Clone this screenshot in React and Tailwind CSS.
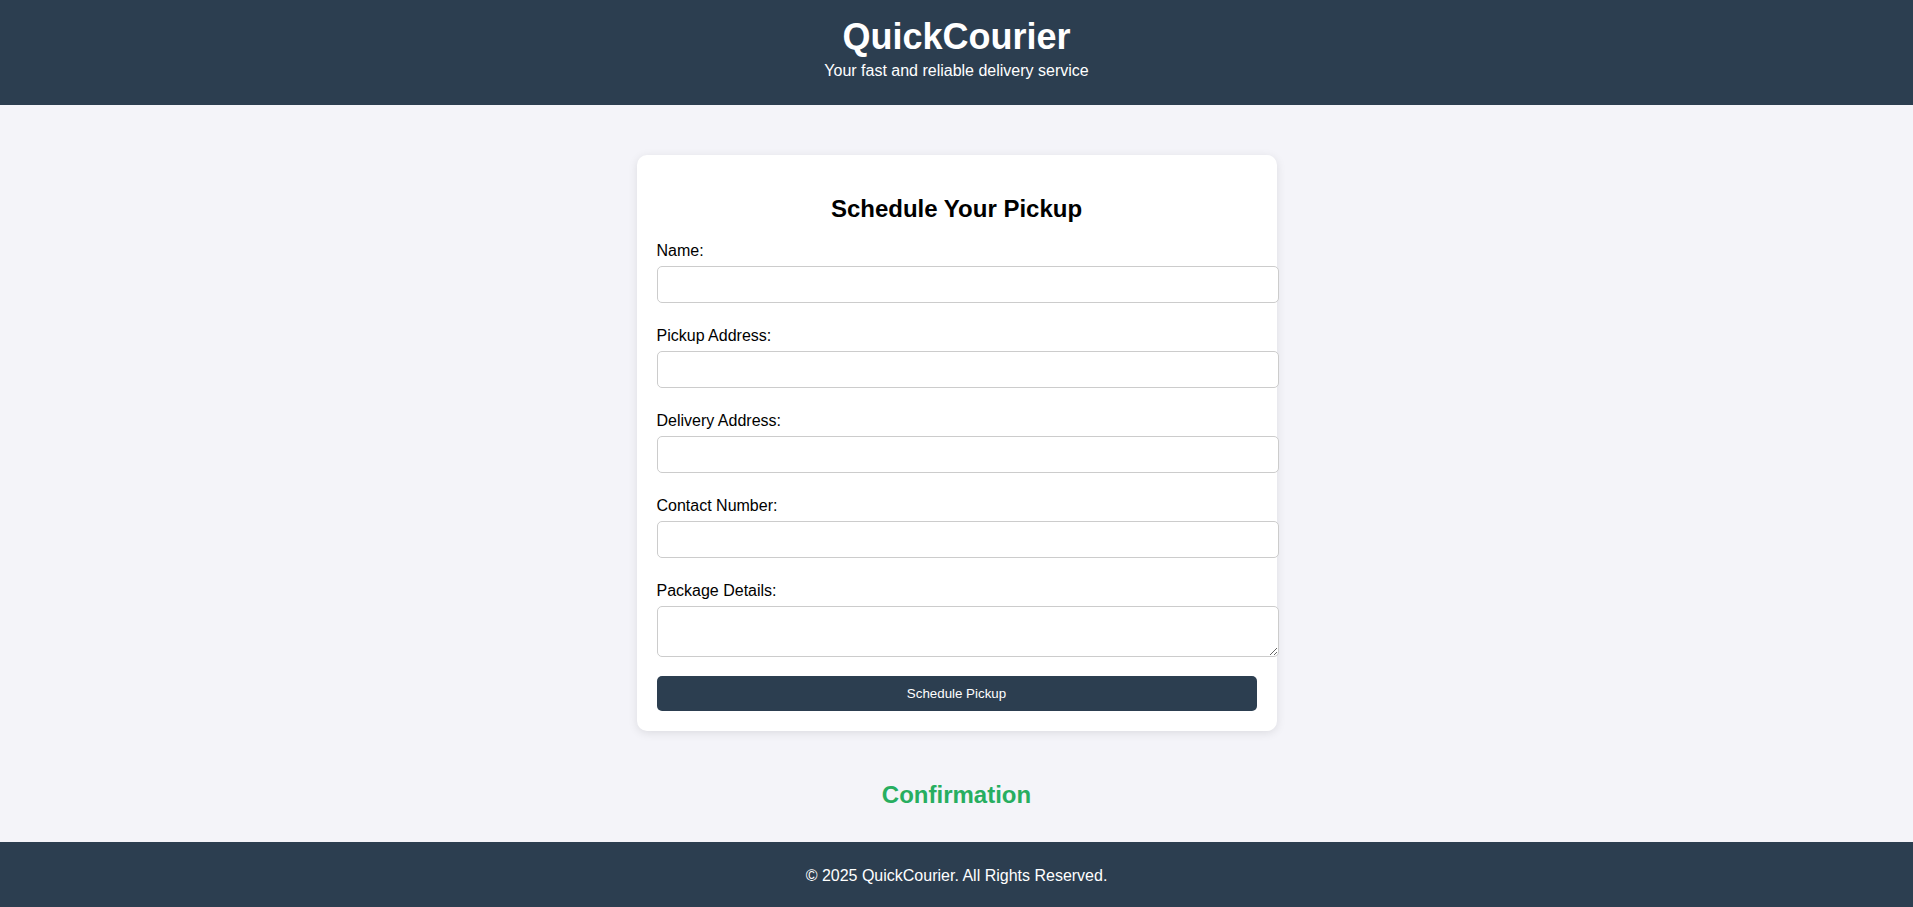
export default function App() {
  const fields = [
    { label: "Name:", id: "name" },
    { label: "Pickup Address:", id: "pickup" },
    { label: "Delivery Address:", id: "delivery" },
    { label: "Contact Number:", id: "contact" },
  ];
  return (
    <div
      className="min-h-screen bg-[#f4f4f9] text-black flex flex-col"
      style={{ fontFamily: '"Liberation Sans", Arial, sans-serif' }}
    >
      <header className="bg-[#2c3e50] text-white h-[105px] flex flex-col items-center pt-[16px]">
        <h1 className="text-[36px] leading-[41px] font-bold">QuickCourier</h1>
        <p className="text-[16px] leading-[18px] mt-[5px]">Your fast and reliable delivery service</p>
      </header>

      <main className="flex flex-col items-center pt-[50px]">
        <div className="w-[640px] bg-white rounded-[10px] p-[20px] shadow-[0_2px_10px_rgba(0,0,0,0.1)]">
          <h2 className="text-[24px] leading-[28px] font-bold text-center mt-[20px] mb-[20px]">
            Schedule Your Pickup
          </h2>
          <form className="flex flex-col" onSubmit={(e) => e.preventDefault()}>
            {fields.map((f) => (
              <div key={f.id} className="flex flex-col mb-[25px]">
                <label htmlFor={f.id} className="text-[16px] leading-[16px] mb-[7px]">
                  {f.label}
                </label>
                <input
                  id={f.id}
                  type="text"
                  className="w-[622px] h-[37px] px-[10px] border border-[#cccccc] rounded-[5px] bg-white text-[13px] outline-none"
                />
              </div>
            ))}
            <div className="flex flex-col">
              <label htmlFor="pkg" className="text-[16px] leading-[16px] mb-[7px]">
                Package Details:
              </label>
              <textarea
                id="pkg"
                className="w-[622px] h-[51px] p-[10px] border border-[#cccccc] rounded-[5px] bg-white text-[13px] outline-none resize-y"
              />
            </div>
            <button
              type="submit"
              className="mt-[19px] w-[600px] h-[35px] bg-[#2c3e50] text-white rounded-[5px] text-[13.33px]"
            >
              Schedule Pickup
            </button>
          </form>
        </div>

        <h2 className="mt-[50px] text-[24px] leading-[28px] font-bold text-[#27ae60] text-center">
          Confirmation
        </h2>
      </main>

      <footer className="mt-[33px] bg-[#2c3e50] text-white h-[65px] flex items-center justify-center">
        <p className="text-[16px] leading-[18px] mt-[2px]">© 2025 QuickCourier. All Rights Reserved.</p>
      </footer>
    </div>
  );
}
